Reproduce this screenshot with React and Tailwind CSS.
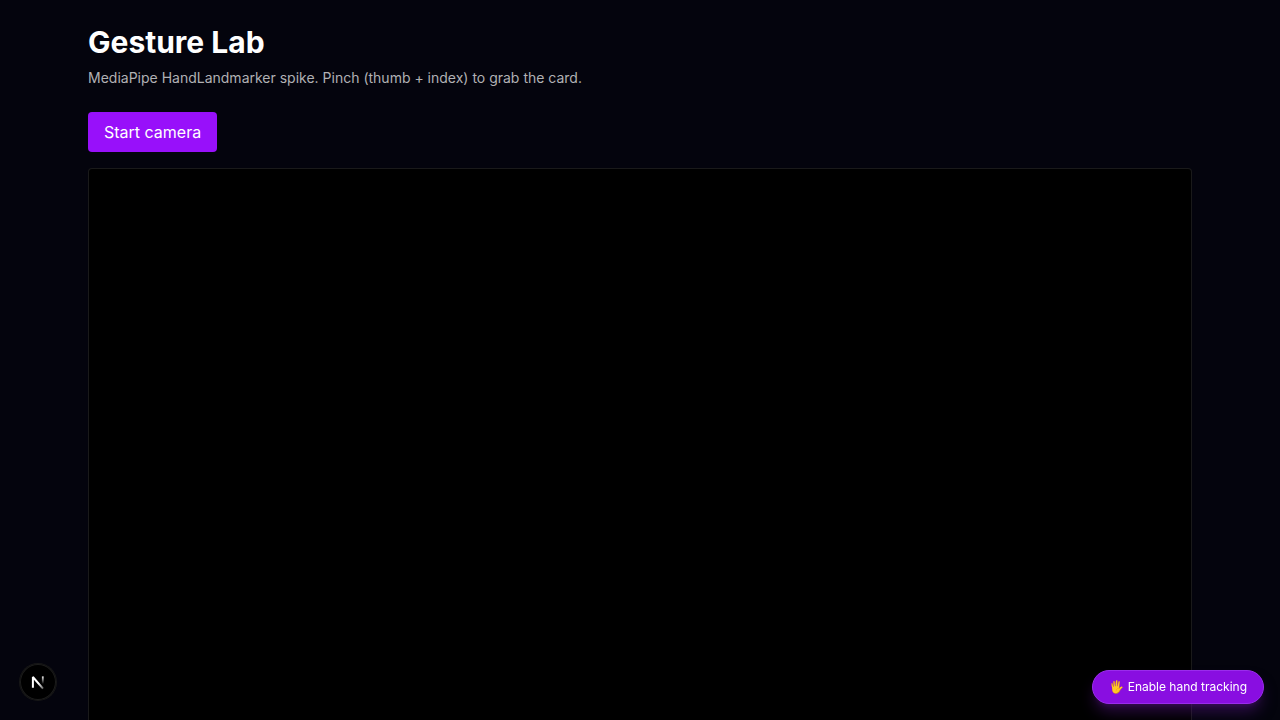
import { useState } from "react";

function NextLogo() {
  return (
    <svg width="36" height="36" viewBox="0 0 36 36" fill="none" aria-hidden="true">
      <defs>
        <linearGradient id="diagonal" x1="19" y1="19" x2="24" y2="25" gradientUnits="userSpaceOnUse">
          <stop stopColor="#fff" />
          <stop offset="1" stopColor="#fff" stopOpacity="0.3" />
        </linearGradient>
        <linearGradient id="stem" x1="22" y1="12" x2="22" y2="20" gradientUnits="userSpaceOnUse">
          <stop stopColor="#fff" />
          <stop offset="1" stopColor="#fff" stopOpacity="0" />
        </linearGradient>
      </defs>
      <path d="M12.9 23.8V13L23 24.6" stroke="url(#diagonal)" strokeWidth="2" strokeLinejoin="bevel" />
      <path d="M22.8 12.4V20" stroke="url(#stem)" strokeWidth="1.8" />
    </svg>
  );
}

export default function App() {
  const [running, setRunning] = useState(false);
  const [tracking, setTracking] = useState(false);

  return (
    <div className="min-h-screen bg-[#04040d] font-['Inter',sans-serif] text-white antialiased">
      <main className="mx-auto max-w-6xl p-6">
        <h1 className="text-3xl font-bold">Gesture Lab</h1>
        <p className="mt-2 text-sm text-[#b1b1b4]">
          MediaPipe HandLandmarker spike. Pinch (thumb + index) to grab the card.
        </p>

        <button
          type="button"
          onClick={() => setRunning(!running)}
          className="mt-6 block rounded bg-[#9810fa] px-4 py-2"
        >
          {running ? "Stop camera" : "Start camera"}
        </button>

        <div className="mt-4 aspect-video w-full overflow-hidden rounded border border-white/10 bg-black">
          <video className="h-full w-full" muted playsInline />
        </div>
      </main>

      <button
        type="button"
        aria-label="Open Next.js Dev Tools"
        className="fixed bottom-5 left-5 flex size-9 items-center justify-center rounded-full bg-black shadow-[0_0_0_1px_#171717,inset_0_0_0_1px_#1c1c1c]"
      >
        <NextLogo />
      </button>

      <button
        type="button"
        onClick={() => setTracking(!tracking)}
        className="fixed right-4 bottom-4 rounded-full border border-[#9a2cec] bg-[#890ee1] px-4 py-2 text-xs shadow-lg shadow-purple-900/50"
      >
        {tracking ? "🖐️ Disable hand tracking" : "🖐️ Enable hand tracking"}
      </button>
    </div>
  );
}
